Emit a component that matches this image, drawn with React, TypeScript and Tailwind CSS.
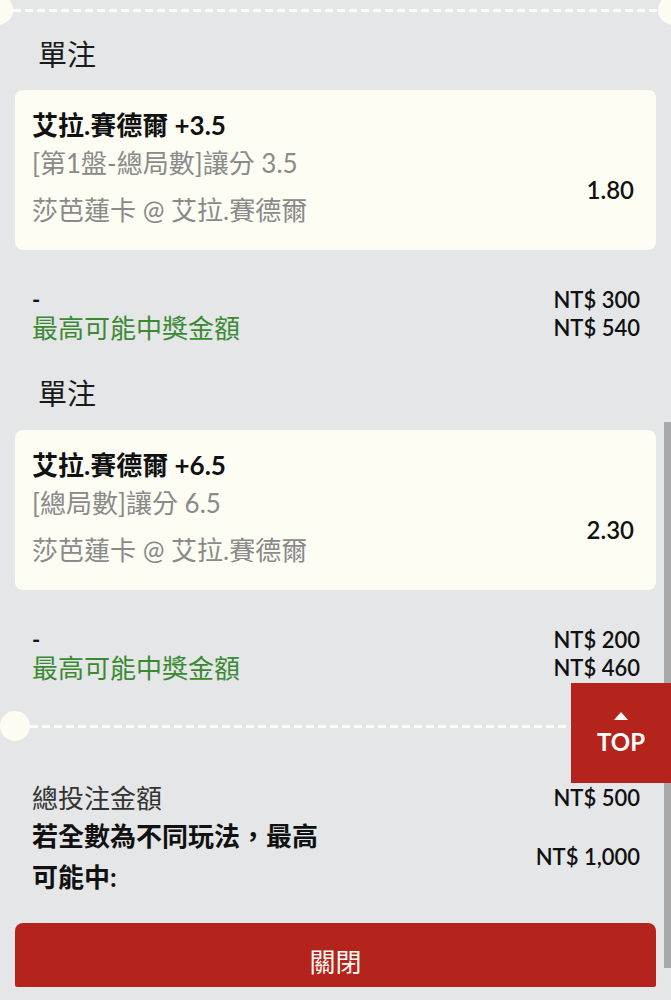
import React from "react";

function Divider({ variant }: { variant: "top" | "bottom" }) {
  const isTop = variant === "top";
  return (
    <div className={isTop ? "relative h-[20px] flex items-center pl-[13px] pr-[14px]" : "relative h-[30px] flex items-center pl-[30px] pr-[30px]"}>
      <div
        className={
          isTop
            ? "absolute left-[-17px] top-[-5px] w-[30px] h-[30px] rounded-full bg-[#fdfcf2]"
            : "absolute left-0 top-0 w-[30px] h-[30px] rounded-full bg-[#fdfcf2]"
        }
      />
      <div className="flex-1 h-[3px] bg-[image:repeating-linear-gradient(90deg,#fdfcf2_0px,#fdfcf2_8px,transparent_8px,transparent_12px)]" />
      <div
        className={
          isTop
            ? "absolute right-[-17px] top-[-5px] w-[30px] h-[30px] rounded-full bg-[#fdfcf2]"
            : "absolute right-0 top-0 w-[30px] h-[30px] rounded-full bg-[#fdfcf2]"
        }
      />
    </div>
  );
}

function BetCard({ title, line2, line3, odds }: { title: string; line2: string; line3: string; odds: string }) {
  return (
    <div className="mx-[15px] h-[160px] rounded-[8px] bg-[#fdfdf4] flex justify-between pl-[17px] pr-[22px]">
      <div className="flex flex-col">
        <div className="mt-[18px] h-[34px] leading-[34px] text-[26px] font-bold text-[#111111] whitespace-nowrap">{title}</div>
        <div className="mt-[2px] h-[38px] leading-[38px] text-[26px] text-[#8a8a8a] whitespace-nowrap">{line2}</div>
        <div className="mt-[8px] h-[40px] leading-[40px] text-[26px] text-[#8a8a8a] whitespace-nowrap">{line3}</div>
      </div>
      <div className="mt-[83px] h-[34px] leading-[34px] text-[24px] font-semibold text-[#111111]">{odds}</div>
    </div>
  );
}

function Summary({ stake, win }: { stake: string; win: string }) {
  return (
    <div className="mt-[36px] pr-[31px] pl-[32px] flex justify-between">
      <div>
        <div className="h-[28px] leading-[28px] text-[22px] font-bold text-[#111111]">-</div>
        <div className="h-[28px] leading-[28px] text-[26px] text-[#3b8a33] whitespace-nowrap">最高可能中獎金額</div>
      </div>
      <div className="text-right">
        <div className="h-[28px] leading-[28px] text-[22px] font-semibold text-[#111111]">{stake}</div>
        <div className="h-[28px] leading-[28px] text-[22px] font-semibold text-[#111111]">{win}</div>
      </div>
    </div>
  );
}

export default function App() {
  return (
    <div className="relative w-[671px] h-[1000px] overflow-hidden bg-[#e4e6e8] font-['Lato','Noto_Sans_CJK_TC',sans-serif]">
      <Divider variant="top" />
      <div className="h-[70px] flex items-center pl-[38px] text-[29px] text-[#1a1a1a]">單注</div>
      <BetCard title="艾拉.賽德爾 +3.5" line2="[第1盤-總局數]讓分 3.5" line3="莎芭蓮卡 @ 艾拉.賽德爾" odds="1.80" />
      <Summary stake="NT$ 300" win="NT$ 540" />
      <div className="mt-[16px] h-[72px] flex items-center pl-[38px] text-[29px] text-[#1a1a1a]">單注</div>
      <BetCard title="艾拉.賽德爾 +6.5" line2="[總局數]讓分 6.5" line3="莎芭蓮卡 @ 艾拉.賽德爾" odds="2.30" />
      <Summary stake="NT$ 200" win="NT$ 460" />
      <div className="mt-[29px]">
        <Divider variant="bottom" />
      </div>

      <div className="mt-[42px] pl-[32px] pr-[31px] flex justify-between items-center h-[30px]">
        <div className="text-[26px] text-[#333333] leading-[30px]">總投注金額</div>
        <div className="text-[22px] font-semibold text-[#111111] leading-[30px]">NT$ 500</div>
      </div>
      <div className="mt-[3px] pl-[32px] pr-[31px] flex justify-between items-center">
        <div className="text-[26px] font-bold text-[#111111] leading-[41px]">
          若全數為不同玩法，最高
          <br />
          可能中:
        </div>
        <div className="text-[22px] font-semibold text-[#111111] leading-[30px]">NT$ 1,000</div>
      </div>

      <button className="mt-[25px] mx-[15px] w-[641px] h-[64px] pt-[14px] rounded-t-[8px] rounded-b-[2px] bg-[#b4231c] text-[#fdfcf2] text-[26px] flex items-center justify-center">
        關閉
      </button>

      {/* Scrollbar */}
      <div className="absolute right-0 top-[422px] w-[7px] h-[546px] bg-[#a9a9a9]" />

      {/* Back-to-top floating button */}
      <div className="absolute left-[571px] top-[683px] w-[100px] h-[100px] bg-[#b4231c] flex flex-col items-center">
        <svg className="mt-[29px]" width="14" height="8" viewBox="0 0 14 8">
          <polygon points="7,0 14,8 0,8" fill="#ffffff" />
        </svg>
        <div className="mt-[8px] text-[24px] font-bold text-white leading-[28px]">TOP</div>
      </div>
    </div>
  );
}
